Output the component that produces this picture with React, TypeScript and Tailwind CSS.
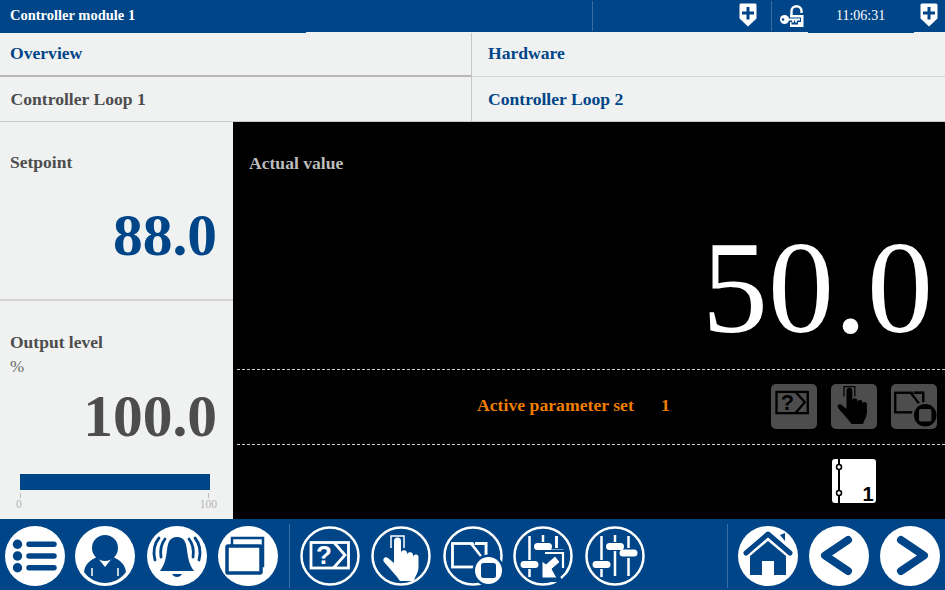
import React from 'react';

type GlyphProps = { fg: string; bg: string };

const BLUE = '#004587';

const Shield = () => (
  <svg width="18" height="24" viewBox="0 0 18 24">
    <path d="M2 0.500H16Q17.500 0.500 17.500 2V15.500L9 23.500L0.500 15.500V2Q0.500 0.500 2 0.500Z" fill="#fff" />
    <path d="M7.500 4H10.500V8.500H15V11.500H10.500V16.500H7.500V11.500H3V8.500H7.500Z" fill={BLUE} />
  </svg>
);

const KeyLock = () => (
  <svg width="24" height="23" viewBox="0 0 24 23">
    <path d="M11.500 11V6.200A5 5 0 0 1 21.500 6.200V8" fill="none" stroke="#fff" strokeWidth="2.400" />
    <path d="M10 10H23.500V22H10Z" fill="#fff" />
    <path d="M6 12.500H21V17H18V19.500H11.500V17H6Z" fill={BLUE} />
    <circle cx="4.500" cy="14.500" r="4.500" fill="#fff" />
    <circle cx="3" cy="14.500" r="1.300" fill={BLUE} />
    <path d="M7 14.500H20M16 14.500V17.500M13 14.500V17.500" fill="none" stroke="#fff" strokeWidth="1.800" />
  </svg>
);

const Disc = ({ children }: { children: React.ReactNode }) => (
  <svg width="60" height="60" viewBox="0 0 60 60" className="shrink-0">
    <circle cx="30" cy="30" r="30" fill="#fff" />
    {children}
  </svg>
);

const Ring = ({ children }: { children: React.ReactNode }) => (
  <svg width="60" height="60" viewBox="0 0 60 60" className="shrink-0">
    <circle cx="30" cy="30" r="28.500" fill="none" stroke="#fff" strokeWidth="2.500" />
    {children}
  </svg>
);

const HelpGlyph = ({ fg }: GlyphProps) => (
  <g>
    <rect x="11" y="16.500" width="37.500" height="25.500" fill="none" stroke={fg} strokeWidth="2.800" />
    <path d="M34 16.500L45 29L33.500 42" fill="none" stroke={fg} strokeWidth="2.800" />
    <text x="24" y="38" textAnchor="middle" fontSize="26" fontWeight="700" fontFamily="'Liberation Sans', sans-serif" fill={fg}>?</text>
  </g>
);

const HandGlyph = ({ fg }: GlyphProps) => (
  <g>
    <path d="M20 22V10H33V22" fill="none" stroke={fg} strokeWidth="1.500" />
    <path
      d="M23 15A3.500 3.500 0 0 1 30 15V27A3 3 0 0 1 36 27.500V29A3 3 0 0 1 42 29.500V31A2.700 2.700 0 0 1 47.500 31.500V41C47.500 47 44 50 43 55H29C25 49 19 43 13 36C11 33 14 30 17 32L23 37Z"
      fill={fg}
    />
  </g>
);

const StopGlyph = ({ fg, bg }: GlyphProps) => (
  <g>
    <rect x="9.500" y="17.500" width="33.500" height="23.500" fill="none" stroke={fg} strokeWidth="2.800" />
    <path d="M28 17.500L38 30" fill="none" stroke={fg} strokeWidth="2.800" />
    <path d="M30 16H44.500V27L38.500 29Z" fill={bg} />
    <path d="M32 17.500H43V29" fill="none" stroke={fg} strokeWidth="2.800" />
    <circle cx="45.500" cy="44.500" r="16" fill={bg} />
    <circle cx="45.500" cy="44.500" r="13.500" fill={fg} />
    <rect x="38" y="37" width="15" height="15" rx="2.500" fill={bg} />
  </g>
);

const SliderBars = ({ withArrow }: { withArrow?: boolean }) => (
  <g stroke="#fff" strokeWidth="2.500" fill="none">
    <path d="M16.500 10V34M16.500 43V51" />
    <path d="M30 9V16M30 25V50" />
    <path d="M43.500 10V22M43.500 32V50" />
    <path d="M11 38.500H22M24.500 20.500H35.500M38 27H49" strokeWidth="7" strokeLinecap="round" />
    {withArrow && (
      <>
        <path d="M27 24H53V56H27Z" fill={BLUE} stroke="none" />
        <path d="M32 27H50V42" strokeWidth="2.200" />
        <path d="M29 52V35L33 38L42 30L47 36L39 43L44 52Z" fill="#fff" stroke={BLUE} strokeWidth="1" />
        <path d="M43.500 10V22" />
        <path d="M56 42A28.500 28.500 0 0 1 48 52" strokeWidth="2.500" />
      </>
    )}
  </g>
);

const BookIcon = () => (
  <svg width="46" height="46" viewBox="0 0 46 46">
    <rect x="1" y="1" width="44" height="44" rx="3" fill="#fff" />
    <path d="M8 0V46" stroke="#000" strokeWidth="2" />
    <circle cx="8" cy="9" r="2.500" fill="#fff" stroke="#000" strokeWidth="1.500" />
    <circle cx="8" cy="35" r="2.500" fill="#fff" stroke="#000" strokeWidth="1.500" />
    <text x="37" y="43" textAnchor="middle" fontSize="20" fontWeight="700" fontFamily="'Liberation Sans', sans-serif" fill="#000">1</text>
  </svg>
);

const GrayTile = ({ children }: { children: React.ReactNode }) => (
  <div className="w-[46px] h-[45px] rounded-[5px] bg-[#4d4d4d] overflow-hidden">
    <svg width="46" height="45" viewBox="5 7 54 54">{children}</svg>
  </div>
);

const Divider = ({ className }: { className: string }) => <div className={`w-px h-[64px] bg-[#3a6ea5] shrink-0 ${className}`} />;

export default function App() {
  return (
    <div className="w-[945px] h-[590px] overflow-hidden flex flex-col bg-[#f0f2f2] font-['Liberation_Serif',serif]">
      {/* Title bar */}
      <div className="h-[32px] bg-[#004587] flex items-center text-white shrink-0">
        <span className="pl-[10px] w-[592px] text-[14.500px] font-bold">Controller module 1</span>
        <div className="w-px h-[30px] bg-[#3a6ea5]" />
        <div className="ml-[146px] w-[32px] mt-[-3px]"><Shield /></div>
        <div className="w-px h-[30px] bg-[#3a6ea5]" />
        <div className="ml-[8px] w-[56px] mt-[-3px] pt-[3px]"><KeyLock /></div>
        <span className="w-[84px] text-[14px] mt-[-1px]">11:06:31</span>
        <div className="mt-[-3px]"><Shield /></div>
      </div>
      <div className="h-px flex shrink-0">
        <div className="w-[306px] bg-[#004587]" />
        <div className="w-[502px]" />
        <div className="w-[106px] bg-[#004587]" />
      </div>

      {/* Tabs */}
      <div className="grid grid-cols-[472px_1fr] h-[89px] shrink-0 text-[17.600px] font-bold">
        <div className="h-[44px] flex items-center pl-[10px] pb-[2px] text-[#004587] border-r border-[#c8c8c8] border-b-2 border-b-[#b8b8b8]">Overview</div>
        <div className="h-[44px] flex items-center pl-[16px] pb-[2px] text-[#004587] border-b border-[#d4d4d4]">Hardware</div>
        <div className="h-[45px] flex items-center pl-[10.500px] text-[#4d4d4d] border-r border-[#c8c8c8] border-b border-b-[#c8c8c8]">Controller Loop 1</div>
        <div className="h-[45px] flex items-center pl-[16px] text-[#004587] border-b border-[#c8c8c8]">Controller Loop 2</div>
      </div>

      {/* Main */}
      <div className="flex h-[397px] shrink-0">
        <div className="w-[233px] shrink-0 flex flex-col">
          <div className="h-[179px] border-b-2 border-[#d4d4d4] pt-[27px] px-[10px] pr-[16px]">
            <div className="text-[17.500px] font-bold text-[#4d4d4d]">Setpoint</div>
            <div className="mt-[25px] text-right text-[59.500px] leading-[70px] font-bold text-[#004587]">88.0</div>
          </div>
          <div className="flex-1 pl-[10px] pr-[16px] pt-[30px]">
            <div className="text-[17.500px] font-bold text-[#4d4d4d] leading-[22px]">Output level</div>
            <div className="text-[17px] text-[#666] leading-[24px] mt-[2px]">%</div>
            <div className="mt-[2px] text-right text-[59.500px] leading-[70px] font-bold text-[#4d4d4d]">100.0</div>
            <div className="mt-[23px] ml-[10px] mr-[7px] h-[16px] bg-[#004587]" />
            <div className="ml-[10px] mr-[8px] mt-[3px] flex justify-between">
              <div className="w-px h-[5px] bg-[#bbb]" />
              <div className="w-px h-[5px] bg-[#bbb]" />
            </div>
            <div className="flex justify-between ml-[6px] text-[11.500px] leading-[12px] text-[#b4b4b4]">
              <span>0</span>
              <span>100</span>
            </div>
          </div>
        </div>

        <div className="flex-1 bg-black flex flex-col">
          <div className="h-[248px] ml-[4px] border-b border-dashed border-[#d0d0d0] pt-[30px]">
            <div className="pl-[12px] text-[17.600px] leading-[22px] font-bold text-[#bdbdbd]">Actual value</div>
            <div className="text-right pr-[12px] mt-[47px] text-[132px] leading-[134px] text-white">50.0</div>
          </div>
          <div className="h-[75px] ml-[4px] border-b border-dashed border-[#d0d0d0] flex items-center">
            <span className="ml-[240px] w-[184px] text-[17.700px] font-bold text-[#f07d00] mt-[-3px]">Active parameter set</span>
            <span className="w-[110px] text-[17.700px] font-bold text-[#f07d00] mt-[-3px]">1</span>
            <div className="flex gap-[14px] mt-[-2px]">
              <GrayTile><HelpGlyph fg="#000" bg="#4d4d4d" /></GrayTile>
              <GrayTile><HandGlyph fg="#000" bg="#4d4d4d" /></GrayTile>
              <GrayTile><StopGlyph fg="#000" bg="#4d4d4d" /></GrayTile>
            </div>
          </div>
          <div className="flex-1 pl-[598px] pt-[13px]">
            <BookIcon />
          </div>
        </div>
      </div>

      {/* Toolbar */}
      <div className="h-[71px] bg-[#004587] flex items-center pl-[5px] pt-[3px] shrink-0">
        <Disc>
          <g fill="#004587">
            <circle cx="12.500" cy="18.300" r="4.700" />
            <circle cx="12.500" cy="30" r="4.700" />
            <circle cx="12.500" cy="41.700" r="4.700" />
          </g>
          <path d="M24 18.300H49M24 30H49M24 41.700H49" stroke="#004587" strokeWidth="5.500" strokeLinecap="round" />
        </Disc>
        <div className="w-[10px]" />
        <Disc>
          <circle cx="30" cy="22" r="13" fill="#004587" />
          <path d="M9 46C10 38 15 34 22 31L30 41L38 31C45 34 50 38 51 46C46 53 38 57 30 57C22 57 14 53 9 46Z" fill="#004587" />
          <path d="M17 42V50M43 42V50" stroke="#fff" strokeWidth="1.500" />
        </Disc>
        <div className="w-[12px]" />
        <Disc>
          <path d="M30 11C23 11 21 16 20 24C19 32 18 38 13 45H47C42 38 41 32 40 24C39 16 37 11 30 11Z" fill="#004587" />
          <path d="M25 48H35C33 52 27 52 25 48Z" fill="#004587" />
          <path d="M12 12C7 18 6 26 8 34M18 13C14 18 13 24 14 31M48 12C53 18 54 26 52 34M42 13C46 18 47 24 46 31" fill="none" stroke="#004587" strokeWidth="2.800" strokeLinecap="round" />
        </Disc>
        <div className="w-[11px]" />
        <Disc>
          <path d="M14 19V12H45V40H43" fill="none" stroke="#004587" strokeWidth="2.500" />
          <rect x="9" y="20" width="34" height="27" fill="none" stroke="#004587" strokeWidth="3.500" rx="1" />
        </Disc>
        <Divider className="ml-[11px] mr-[10px]" />
        <Ring><HelpGlyph fg="#fff" bg={BLUE} /></Ring>
        <div className="w-[11px]" />
        <Ring><HandGlyph fg="#fff" bg={BLUE} /></Ring>
        <div className="w-[12px]" />
        <Ring><StopGlyph fg="#fff" bg={BLUE} /></Ring>
        <div className="w-[10px]" />
        <Ring><SliderBars withArrow /></Ring>
        <div className="w-[12px]" />
        <Ring><SliderBars /></Ring>
        <Divider className="ml-[82px] mr-[10px]" />
        <Disc>
          <path d="M8 27L30 8L52 27" fill="none" stroke="#004587" strokeWidth="5" strokeLinecap="round" strokeLinejoin="round" />
          <path d="M42 9L47 7V15Z" fill="#004587" />
          <path d="M12 30L30 15L48 30V49H36V35H24V49H12Z" fill="#004587" />
        </Disc>
        <div className="w-[11px]" />
        <Disc>
          <path d="M39 14L16 29.500L39 45" fill="none" stroke="#004587" strokeWidth="8" strokeLinecap="round" strokeLinejoin="round" />
        </Disc>
        <div className="w-[11px]" />
        <Disc>
          <path d="M21 14L44 29.500L21 45" fill="none" stroke="#004587" strokeWidth="8" strokeLinecap="round" strokeLinejoin="round" />
        </Disc>
      </div>
    </div>
  );
}
